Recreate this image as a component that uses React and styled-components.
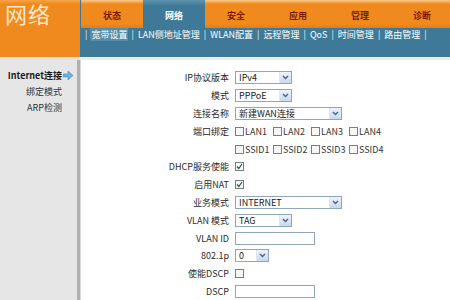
import React from "react";
import styled, { createGlobalStyle } from "styled-components";

const GlobalStyle = createGlobalStyle`
  html, body {
    margin: 0;
    padding: 0;
    background: #fff;
    overflow: hidden;
  }
  body {
    font-family: "Noto Sans CJK SC", "DejaVu Sans", sans-serif;
  }
`;

const tabs = ["状态", "网络", "安全", "应用", "管理", "诊断"];
const subLinks = ["宽带设置", "LAN侧地址管理", "WLAN配置", "远程管理", "QoS", "时间管理", "路由管理"];

function Arrow() {
  return (
    <svg width="10" height="9" viewBox="0 0 10 9">
      <path d="M0 3h5V0l5 4.5L5 9V6H0z" fill="#6fb0dc" stroke="#4a8cc0" strokeWidth="0.6" />
    </svg>
  );
}

function Chevron() {
  return (
    <svg width="7" height="5" viewBox="0 0 7 5">
      <path d="M1 1l2.5 2.5L6 1" fill="none" stroke="#4d6185" strokeWidth="1.4" />
    </svg>
  );
}

function Check() {
  return (
    <svg width="7" height="7" viewBox="0 0 7 7">
      <path d="M1 3.5l1.8 2L6 1" fill="none" stroke="#2f5a2f" strokeWidth="1.2" />
    </svg>
  );
}

function Select({ value, width }) {
  return (
    <SelectBox $w={width}>
      <span>{value}</span>
      <SelectBtn>
        <Chevron />
      </SelectBtn>
    </SelectBox>
  );
}

function Checkbox({ checked, label }) {
  return (
    <CheckItem>
      <Box>{checked && <Check />}</Box>
      {label && <span>{label}</span>}
    </CheckItem>
  );
}

export default function App() {
  return (
    <Page>
      <GlobalStyle />
      <Logo>网络</Logo>
      <Nav>
        <Tabs>
          {tabs.map((t) => (
            <Tab key={t} $active={t === "网络"}>
              {t}
            </Tab>
          ))}
        </Tabs>
        <SubNav>
          <Sep>|</Sep>
          {subLinks.map((s, i) => (
            <React.Fragment key={s}>
              <SubLink $active={i === 0}>{s}</SubLink>
              <Sep>|</Sep>
            </React.Fragment>
          ))}
        </SubNav>
      </Nav>
      <Strip />
      <Side>
        <SideItem $bold>
          Internet连接 <Arrow />
        </SideItem>
        <SideItem>绑定模式</SideItem>
        <SideItem>ARP检测</SideItem>
      </Side>
      <Main>
        <Form>
          <Label>IP协议版本</Label>
          <Cell><Select value="IPv4" width={57} /></Cell>

          <Label>模式</Label>
          <Cell><Select value="PPPoE" width={57} /></Cell>

          <Label>连接名称</Label>
          <Cell><Select value="新建WAN连接" width={107} /></Cell>

          <Label>端口绑定</Label>
          <Cell>
            {["LAN1", "LAN2", "LAN3", "LAN4"].map((l) => (
              <Checkbox key={l} label={l} />
            ))}
          </Cell>

          <Label />
          <Cell>
            {["SSID1", "SSID2", "SSID3", "SSID4"].map((l) => (
              <Checkbox key={l} label={l} />
            ))}
          </Cell>

          <Label>DHCP服务使能</Label>
          <Cell><Checkbox checked /></Cell>

          <Label>启用NAT</Label>
          <Cell><Checkbox checked /></Cell>

          <Label>业务模式</Label>
          <Cell><Select value="INTERNET" width={107} /></Cell>

          <Label>VLAN 模式</Label>
          <Cell><Select value="TAG" width={57} /></Cell>

          <Label>VLAN ID</Label>
          <Cell><Input /></Cell>

          <Label>802.1p</Label>
          <Cell><Select value="0" width={34} /></Cell>

          <Label>使能DSCP</Label>
          <Cell><Checkbox /></Cell>

          <Label>DSCP</Label>
          <Cell><Input /></Cell>
        </Form>
      </Main>
    </Page>
  );
}

const Page = styled.div`
  width: 450px;
  height: 300px;
  display: grid;
  grid-template-columns: 80px 1fr;
  grid-template-rows: 57px 3px 1fr;
  overflow: hidden;
`;

const Logo = styled.div`
  background: linear-gradient(#f7a54a 0, #f08a1e 4px, #f08a1e 100%);
  color: #fde6cc;
  font-size: 22px;
  line-height: 24px;
  padding: 1px 0 0 5px;
  letter-spacing: 1px;
`;

const Nav = styled.div`
  display: flex;
  flex-direction: column;
  padding-left: 1px;
  background: #3e7a98;
`;

const Tabs = styled.div`
  height: 28px;
  display: flex;
  background: linear-gradient(#f9c98a 0, #f08a1e 4px, #f08a1e 24px, #e07d18 28px);
`;

const Tab = styled.div`
  width: 62px;
  display: flex;
  align-items: center;
  justify-content: center;
  padding-top: 2px;
  font-size: 9px;
  font-weight: bold;
  color: ${(p) => (p.$active ? "#ffffff" : "#7a1a05")};
  background: ${(p) => (p.$active ? "linear-gradient(#5f93ad, #3e7a98 6px)" : "transparent")};
`;

const SubNav = styled.div`
  display: flex;
  align-items: center;
  height: 12px;
  padding-left: 1px;
  font-size: 9px;
  color: #ffffff;
  white-space: nowrap;
`;

const Sep = styled.span`
  padding: 0 3px;
  color: #e6eef3;
`;

const SubLink = styled.span`
  color: #ffffff;
  background: ${(p) => (p.$active ? "rgba(255,255,255,0.14)" : "transparent")};
  padding: 0 1px;
`;

const Strip = styled.div`
  grid-column: 1 / span 2;
  background: linear-gradient(90deg, #e0e0e0 80px, #ececec 80px);
`;

const Side = styled.div`
  background: #e6e6e6;
  border-right: 3px solid #b0b0b0;
  box-shadow: 1px 0 0 #d6d6d6;
  display: flex;
  flex-direction: column;
  align-items: flex-end;
  padding: 9px 4px 0 0;
  gap: 3px;
`;

const SideItem = styled.div`
  display: flex;
  align-items: center;
  gap: 1px;
  height: 13px;
  font-size: 9px;
  font-weight: ${(p) => (p.$bold ? "bold" : "normal")};
  color: ${(p) => (p.$bold ? "#1a1a1a" : "#333")};
  margin-right: ${(p) => (p.$bold ? "0" : "11px")};
  white-space: nowrap;
`;

const Main = styled.div`
  background: #fff;
  padding-top: 9px;
  margin-left: 1px;
`;

const Form = styled.div`
  display: grid;
  grid-template-columns: 148px 1fr;
  grid-auto-rows: 17.8px;
  column-gap: 6px;
`;

const Label = styled.div`
  display: flex;
  align-items: center;
  justify-content: flex-end;
  font-size: 9px;
  color: #2a2a2a;
  white-space: nowrap;
`;

const Cell = styled.div`
  display: flex;
  align-items: center;
`;

const SelectBox = styled.div`
  width: ${(p) => p.$w}px;
  height: 13px;
  box-sizing: border-box;
  border: 1px solid #8fa4bf;
  display: flex;
  align-items: center;
  justify-content: space-between;
  font-size: 9px;
  color: #1a1a1a;
  background: #fff;

  span {
    padding-left: 3px;
    white-space: nowrap;
  }
`;

const SelectBtn = styled.div`
  width: 11px;
  height: 11px;
  display: flex;
  align-items: center;
  justify-content: center;
  background: linear-gradient(#eef3fb, #c9d8ee);
  border-left: 1px solid #dfe7f3;
`;

const Input = styled.div`
  width: 80px;
  height: 13px;
  box-sizing: border-box;
  border: 1px solid #8fa4bf;
  background: #fff;
`;

const CheckItem = styled.div`
  width: 38px;
  display: flex;
  align-items: center;
  font-size: 9px;
  color: #333;

  span {
    margin-left: 1px;
  }
`;

const Box = styled.div`
  width: 9px;
  height: 9px;
  box-sizing: border-box;
  border: 1px solid #6f7f8f;
  background: #f6f6f6;
  display: flex;
  align-items: center;
  justify-content: center;
`;
